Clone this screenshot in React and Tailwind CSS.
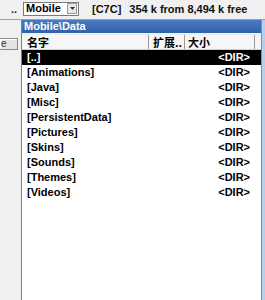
import React from 'react';

const rows = [
  '[..]',
  '[Animations]',
  '[Java]',
  '[Misc]',
  '[PersistentData]',
  '[Pictures]',
  '[Skins]',
  '[Sounds]',
  '[Themes]',
  '[Videos]',
];

const Toolbar = () => (
  <div className="h-[20px] flex items-center bg-[#f0f0f0] border-b border-[#a0a0a0]">
    <div className="w-[23px] h-full flex items-center pl-[11px] text-[11px] font-bold text-[#222]">..</div>
    <div className="w-[56px] h-[14px] mt-[-2px] flex items-center bg-white border border-[#7a7a7a]">
      <span className="flex-1 pl-[2px] text-[11px] font-bold leading-none text-black">Mobile</span>
      <span className="w-[10px] h-[11px] mr-[1px] flex items-center justify-center bg-[#e8e8e8] border border-[#9a9a9a]">
        <svg width="5" height="3" viewBox="0 0 5 3">
          <path d="M0 0h5L2.5 3z" fill="#333" />
        </svg>
      </span>
    </div>
    <span className="ml-[13px] text-[11px] font-bold text-[#111] whitespace-nowrap">[C7C]</span>
    <span className="ml-[8px] text-[11px] font-bold text-[#111] whitespace-nowrap">354 k from 8,494 k free</span>
  </div>
);

const Header = () => (
  <div className="h-[15px] flex items-stretch bg-[#f6f6f6] border-b border-[#d0d0d0] text-[11px] leading-none text-black font-['Noto_Sans_CJK_SC',sans-serif] font-bold">
    <div className="w-[127px] flex items-center pl-[5px] border-r border-[#9a9a9a]">名字</div>
    <div className="w-[36px] flex items-center pl-[4px] border-r border-[#9a9a9a] whitespace-nowrap overflow-hidden">扩展..</div>
    <div className="w-[70px] flex items-center pl-[3px] border-r border-[#9a9a9a]">大小</div>
    <div className="flex-1" />
  </div>
);

const FileRow = ({ name, selected }) => (
  <div
    className={
      selected
        ? 'h-[15px] flex items-center justify-between pl-[5px] pr-[11px] bg-black text-white'
        : 'h-[15px] flex items-center justify-between pl-[5px] pr-[11px] text-black'
    }
  >
    <span className="text-[11px] font-bold whitespace-nowrap">{name}</span>
    <span className="text-[11px] font-bold">&lt;DIR&gt;</span>
  </div>
);

export default function App() {
  return (
    <div className="w-[265px] h-[300px] overflow-hidden flex flex-col bg-[#f0f0f0] font-['Liberation_Sans',Arial,sans-serif]">
      <Toolbar />
      <div className="flex-1 flex">
        <div className="w-[22px] flex flex-col border-r border-[#808080]">
          <div className="mt-[18px] w-[18px] h-[12px] flex items-center bg-[#e4e4e4] border-t border-b border-r border-[#8a8a8a] shadow-[inset_1px_1px_0_#fff]">
            <span className="ml-[1px] text-[10px] leading-none text-[#333]">e</span>
          </div>
        </div>
        <div className="flex-1 flex flex-col">
          <div className="h-[13px] flex items-center pl-[2px] bg-gradient-to-b from-[#4a7cc2] to-[#2f62ad]">
            <span className="text-[11px] font-bold leading-none text-white">Mobile\Data</span>
          </div>
          <div className="h-[2px]" />
          <div className="flex-1 flex flex-col bg-white">
            <Header />
            {rows.map((r, i) => (
              <FileRow key={r} name={r} selected={i === 0} />
            ))}
          </div>
        </div>
        <div className="w-[1px] bg-[#8c8c8c]" />
        <div className="w-[3px] bg-[#b7cfe9]" />
      </div>
    </div>
  );
}
